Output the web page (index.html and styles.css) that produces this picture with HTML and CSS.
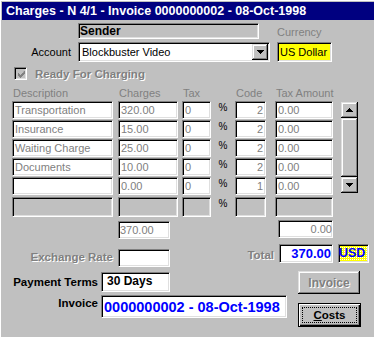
FILE: index.html
```html
<!DOCTYPE html>
<html>
<head>
<meta charset="utf-8">
<link rel="stylesheet" href="styles.css">
</head>
<body>
<div class="win">
  <div class="title">Charges - N 4/1 - Invoice 0000000002 - 08-Oct-1998</div>
  <div class="r1">
    <div class="field sender">Sender</div>
    <div class="lbl-cur">Currency</div>
  </div>
  <div class="r2">
    <div class="lbl-acc">Account</div>
    <div class="field combo">
      <span class="combo-text">Blockbuster Video</span>
      <span class="raised drop"><svg width="7" height="4" viewBox="0 0 7 4"><path d="M0 0h7v1h-1v1h-1v1h-1v1h-1v-1h-1v-1h-1v-1h-1z" fill="#000"/></svg></span>
    </div>
    <div class="field curr">US Dollar</div>
  </div>
  <div class="r3">
    <span class="chk"><svg width="7" height="7" viewBox="0 0 7 7"><path d="M6 0h1v3h-1v1h-1v1h-1v1h-1v1h-1v-1h-1v-1h-1v-3h1v1h1v1h1v-1h1v-1h1z" fill="#808080"/></svg></span>
    <span class="emb chk-text">Ready For Charging</span>
  </div>
  <div class="grid">
    <div class="hd c1">Description</div>
    <div class="hd c3">Charges</div>
    <div class="hd c5">Tax</div>
    <div class="hd c7">Code</div>
    <div class="hd c9">Tax Amount</div>

    <div class="field cell c1">Transportation</div>
    <div class="field cell c3">320.00</div>
    <div class="field cell c5">0</div>
    <div class="pct c6">%</div>
    <div class="field cell c7 right">2</div>
    <div class="field cell c9">0.00</div>

    <div class="field cell c1">Insurance</div>
    <div class="field cell c3">15.00</div>
    <div class="field cell c5">0</div>
    <div class="pct c6">%</div>
    <div class="field cell c7 right">2</div>
    <div class="field cell c9">0.00</div>

    <div class="field cell c1">Waiting Charge</div>
    <div class="field cell c3">25.00</div>
    <div class="field cell c5">0</div>
    <div class="pct c6">%</div>
    <div class="field cell c7 right">2</div>
    <div class="field cell c9">0.00</div>

    <div class="field cell c1">Documents</div>
    <div class="field cell c3">10.00</div>
    <div class="field cell c5">0</div>
    <div class="pct c6">%</div>
    <div class="field cell c7 right">2</div>
    <div class="field cell c9">0.00</div>

    <div class="field cell c1"></div>
    <div class="field cell c3">0.00</div>
    <div class="field cell c5">0</div>
    <div class="pct c6">%</div>
    <div class="field cell c7 right">1</div>
    <div class="field cell c9">0.00</div>

    <div class="field cell g c1"></div>
    <div class="field cell g c3"></div>
    <div class="field cell g c5"></div>
    <div class="pct pct-last c6">%</div>
    <div class="field cell g c7"></div>
    <div class="field cell g c9"></div>

    <div class="scroll">
      <div class="raised sbtn"><svg width="7" height="4" viewBox="0 0 7 4"><path d="M3 0h1v1h1v1h1v1h1v1h-7v-1h1v-1h1v-1h1z" fill="#000"/></svg></div>
      <div class="raised thumb"></div>
      <div class="raised sbtn"><svg width="7" height="4" viewBox="0 0 7 4"><path d="M0 0h7v1h-1v1h-1v1h-1v1h-1v-1h-1v-1h-1v-1h-1z" fill="#000"/></svg></div>
    </div>
  </div>
  <div class="rt">
    <div class="field tot-chg">370.00</div>
    <div class="field tot-tax">0.00</div>
  </div>
  <div class="rx">
    <div class="emb lbl-ex">Exchange Rate</div>
    <div class="field ex-box"></div>
    <div class="emb lbl-tot">Total</div>
    <div class="field tot-box">370.00</div>
    <div class="field usd">USD</div>
  </div>
  <div class="rp">
    <div class="lbl-pay">Payment Terms</div>
    <div class="field pay-box">30 Days</div>
    <div class="raised btn-inv"><span class="emb">Invoice</span></div>
  </div>
  <div class="ri">
    <div class="lbl-inv">Invoice</div>
    <div class="field inv-box">0000000002 - 08-Oct-1998</div>
    <div class="btn-costs"><div class="focus"><span><u>C</u>osts</span></div></div>
  </div>
</div>
</body>
</html>
```
FILE: styles.css
```css
* { box-sizing: border-box; }
body {
  margin: 0;
  background: #c0c0c0;
  font-family: "Liberation Sans", Arial, sans-serif;
  font-size: 11px;
  color: #000;
}
.win {
  width: 374px;
  height: 337px;
  background: #c0c0c0;
  box-shadow: inset 1px 1px #fff;
  padding-top: 2px;
  overflow: hidden;
}
.title {
  margin-left: 2px;
  height: 18px;
  background: #000080;
  color: #fff;
  font-weight: bold;
  font-size: 12.5px;
  line-height: 17px;
  padding: 1px 0 0 4px;
  white-space: nowrap;
  overflow: hidden;
}
.field {
  background: #fff;
  border: 1px solid;
  border-color: #808080 #fff #fff #808080;
  box-shadow: inset 1px 1px #000, inset -1px -1px #dfdfdf;
  overflow: hidden;
  white-space: nowrap;
}
.raised {
  background: #c0c0c0;
  box-shadow: inset -1px -1px #000, inset 1px 1px #dfdfdf, inset -2px -2px #808080, inset 2px 2px #fff;
}
.emb {
  color: #808080;
  text-shadow: 1px 1px 0 #fff;
  font-weight: bold;
}

.r1 { display: flex; height: 16px; margin-top: 3px; }
.sender {
  margin-left: 78px;
  width: 181px;
  height: 16px;
  background: #c0c0c0;
  font-weight: bold;
  font-size: 12px;
  line-height: 12px;
  padding: 1px 0 0 1px;
}
.lbl-cur {
  margin-left: 18px;
  color: #808080;
  align-self: flex-end;
  line-height: 13px;
}

.r2 { display: flex; align-items: center; height: 20px; margin-top: 3px; }
.lbl-acc { width: 71px; text-align: right; margin-right: 7px; }
.combo {
  width: 192px;
  height: 20px;
  display: flex;
  align-items: center;
  padding-left: 3px;
}
.combo-text { flex: 1; }
.drop {
  width: 16px;
  height: 16px;
  margin-right: 1px;
  display: flex;
  align-items: center;
  justify-content: center;
}
.curr {
  margin-left: 7px;
  width: 55px;
  height: 20px;
  background: #ff0;
  padding-left: 2px;
  line-height: 18px;
}

.r3 { display: flex; align-items: center; height: 13px; margin-top: 5px; }
.chk {
  margin-left: 14px;
  width: 13px;
  height: 13px;
  border: 1px solid;
  border-color: #808080 #fff #fff #808080;
  box-shadow: inset 1px 1px #000, inset -1px -1px #dfdfdf;
  background: #c0c0c0;
  display: flex;
  align-items: center;
  justify-content: center;
}
.chk svg { margin: 1px 0 0 1px; }
.chk-text { margin-left: 8px; font-size: 11.5px; }

.grid {
  display: grid;
  margin-top: 4px;
  margin-left: 12px;
  grid-template-columns: 101px 5px 60px 4px 29px 24px 31px 9px 58px 8px 17px;
  grid-template-rows: 17px repeat(5, 19px) 21px;
}
.c1 { grid-column: 1; }
.c3 { grid-column: 3; }
.c5 { grid-column: 5; }
.c6 { grid-column: 6; }
.c7 { grid-column: 7; }
.c9 { grid-column: 9; }
.hd {
  color: #808080;
  padding: 2px 0 0 1px;
  line-height: 14px;
  white-space: nowrap;
}
.cell {
  height: 18px;
  align-self: start;
  color: #808080;
  line-height: 14px;
  padding: 1px 0 0 2px;
}
.cell.right { text-align: right; padding-right: 2px; }
.cell.g { background: #c0c0c0; height: 20px; align-self: end; }
.pct {
  font-size: 10px;
  text-align: center;
  line-height: 12px;
  padding-top: 1px;
  align-self: start;
}
.pct-last { padding-top: 2px; }
.scroll {
  grid-column: 11;
  grid-row: 2 / span 5;
  align-self: start;
  margin-top: 1px;
  height: 91px;
  display: flex;
  flex-direction: column;
}
.sbtn {
  height: 16px;
  display: flex;
  align-items: center;
  justify-content: center;
}
.thumb { flex: 1; }

.rt { display: flex; height: 19px; margin-top: 3px; }
.tot-chg {
  margin-left: 118px;
  margin-top: 1px;
  width: 52px;
  height: 18px;
  color: #808080;
  line-height: 14px;
  padding: 1px 0 0 1px;
}
.tot-tax {
  margin-left: 108px;
  width: 55px;
  height: 18px;
  color: #808080;
  text-align: right;
  line-height: 14px;
  padding: 1px 0 0 0;
}

.rx { display: flex; align-items: flex-start; height: 24px; margin-top: 5px; }
.lbl-ex {
  width: 118px;
  padding-right: 5px;
  text-align: right;
  margin-top: 6px;
  font-size: 11.5px;
  line-height: 14px;
}
.ex-box { width: 52px; height: 18px; margin-top: 5px; }
.lbl-tot {
  width: 109px;
  padding-right: 5px;
  text-align: right;
  margin-top: 4px;
  font-size: 11.5px;
  line-height: 14px;
}
.tot-box {
  width: 54px;
  height: 19px;
  color: #0000ff;
  font-weight: bold;
  font-size: 13px;
  text-align: right;
  padding-right: 1px;
  line-height: 17px;
}
.usd {
  margin-left: 5px;
  width: 31px;
  height: 19px;
  background-color: #ff0;
  background-image: conic-gradient(#fff 0 25%, #ff0 0 100%);
  background-size: 2px 2px;
  color: #0000ff;
  font-weight: bold;
  font-size: 12.5px;
  line-height: 17px;
}

.rp { display: flex; align-items: flex-start; height: 23px; margin-top: 3px; }
.lbl-pay {
  width: 98px;
  text-align: right;
  font-weight: bold;
  font-size: 11.5px;
  line-height: 14px;
  margin-top: 4px;
  white-space: nowrap;
}
.pay-box {
  margin-left: 3px;
  margin-top: 1px;
  width: 69px;
  height: 20px;
  font-weight: bold;
  font-size: 12px;
  padding-left: 5px;
  line-height: 17px;
}
.btn-inv {
  margin-left: 128px;
  width: 62px;
  height: 23px;
  display: flex;
  align-items: center;
  justify-content: center;
  font-size: 12px;
}

.ri { display: flex; align-items: flex-start; height: 32px; margin-top: 1px; }
.lbl-inv {
  width: 98px;
  text-align: right;
  font-weight: bold;
  font-size: 11.5px;
  line-height: 14px;
  margin-top: 1px;
}
.inv-box {
  margin-left: 3px;
  width: 186px;
  height: 23px;
  color: #0000ff;
  font-weight: bold;
  font-size: 14.5px;
  padding: 1px 0 0 2px;
  line-height: 20px;
}
.btn-costs {
  margin-left: 11px;
  margin-top: 8px;
  width: 63px;
  height: 24px;
  border: 1px solid #000;
  background: #c0c0c0;
  box-shadow: inset 1px 1px #fff, inset -1px -1px #000, inset -2px -2px #808080;
  padding: 3px;
}
.focus {
  border: 1px dotted #000;
  height: 100%;
  display: flex;
  align-items: center;
  justify-content: center;
  font-weight: bold;
  font-size: 11.5px;
}
```
